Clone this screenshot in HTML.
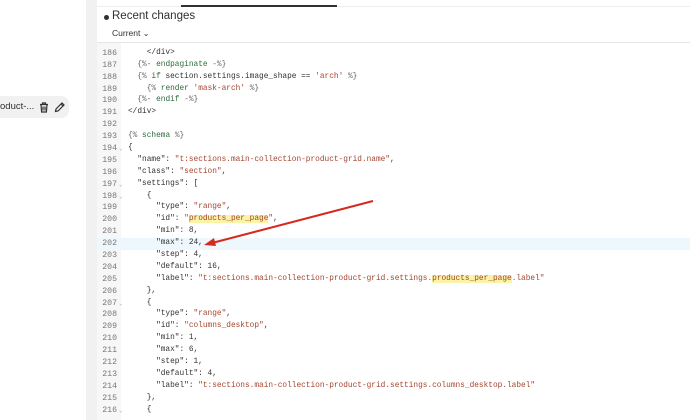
<!DOCTYPE html>
<html><head><meta charset="utf-8"><style>
*{margin:0;padding:0;box-sizing:border-box}
body{width:690px;height:420px;overflow:hidden;background:#fff;font-family:"Liberation Sans",sans-serif;position:relative}
.strip{position:absolute;left:86px;top:0;width:11px;height:420px;background:#f1f1f1}
.pill{position:absolute;left:0;top:96px;width:69px;height:22px;background:#f1f1f1;border-radius:0 8px 8px 0;font-size:9.5px;color:#303030;line-height:22px;padding-left:0}
.hdr{position:absolute;left:97px;top:0;width:593px;height:43px;background:#fff;border-bottom:1px solid #e6e6e6;z-index:2}
.hdr .tl{position:absolute;left:0;top:6px;width:593px;height:1px;background:#eee}
.hdr .tab{position:absolute;left:84px;top:5px;width:156px;height:2px;background:#303030}
.gut{position:absolute;left:97px;top:43px;width:24px;height:377px;background:#f7f7f7}
.code{position:absolute;left:97px;top:36px;width:593px;font-family:"Liberation Mono",monospace;font-size:7.8px;color:#333}
.l{height:11.9px;line-height:11.9px;white-space:pre;position:relative}
.l .n{position:absolute;left:0;width:20px;text-align:right;color:#777;font-size:8.2px}
.l .f{position:absolute;left:22px;color:#aaa;font-size:6px}
.l .c{position:absolute;left:31px}
.hl{background:#eef7fc}
.s{color:#a5452f}.k{color:#2e6b3e}.g{color:#666}
.y{background:#fbf3a6}
</style></head><body>
<div class="strip"></div>
<div class="pill"><span style="position:absolute;left:0">oduct-...</span>
<svg style="position:absolute;left:39px;top:6px" width="10" height="11" viewBox="0 0 10 11"><path d="M1 2.5h8M3.5 2.5V1h3v1.5M2 2.5l.6 7.5h4.8l.6-7.5M4 4.5v4M6 4.5v4" stroke="#303030" stroke-width="1.2" fill="none"/></svg>
<svg style="position:absolute;left:54px;top:6px" width="11" height="11" viewBox="0 0 11 11"><path d="M1.5 9.5l.5-2.5 6-6 2 2-6 6z M7 2l2 2" stroke="#303030" stroke-width="1.2" fill="none"/></svg>
</div>
<div class="gut"></div>
<div class="code">
<div class="l"><span class="n">185</span><span class="c">      &lt;/div&gt;</span></div>
<div class="l"><span class="n">186</span><span class="c">    &lt;/div&gt;</span></div>
<div class="l"><span class="n">187</span><span class="c">  <span class="g">{%-</span> <span class="k">endpaginate</span> <span class="g">-%}</span></span></div>
<div class="l"><span class="n">188</span><span class="c">  <span class="g">{%</span> <span class="k">if</span> section.settings.image_shape == <span class="s">'arch'</span> <span class="g">%}</span></span></div>
<div class="l"><span class="n">189</span><span class="c">    <span class="g">{%</span> <span class="k">render</span> <span class="s">'mask-arch'</span> <span class="g">%}</span></span></div>
<div class="l"><span class="n">190</span><span class="c">  <span class="g">{%-</span> <span class="k">endif</span> <span class="g">-%}</span></span></div>
<div class="l"><span class="n">191</span><span class="c">&lt;/div&gt;</span></div>
<div class="l"><span class="n">192</span><span class="c"></span></div>
<div class="l"><span class="n">193</span><span class="c"><span class="g">{%</span> <span class="k">schema</span> <span class="g">%}</span></span></div>
<div class="l"><span class="n">194</span><span class="f">⌄</span><span class="c">{</span></div>
<div class="l"><span class="n">195</span><span class="c">  "name": <span class="s">"t:sections.main-collection-product-grid.name"</span>,</span></div>
<div class="l"><span class="n">196</span><span class="c">  "class": <span class="s">"section"</span>,</span></div>
<div class="l"><span class="n">197</span><span class="f">⌄</span><span class="c">  "settings": [</span></div>
<div class="l"><span class="n">198</span><span class="f">⌄</span><span class="c">    {</span></div>
<div class="l"><span class="n">199</span><span class="c">      "type": <span class="s">"range"</span>,</span></div>
<div class="l"><span class="n">200</span><span class="c">      "id": <span class="s">"<span class="y">products_per_page</span>"</span>,</span></div>
<div class="l"><span class="n">201</span><span class="c">      "min": 8,</span></div>
<div class="l hl"><span class="n">202</span><span class="c">      "max": 24,</span></div>
<div class="l"><span class="n">203</span><span class="c">      "step": 4,</span></div>
<div class="l"><span class="n">204</span><span class="c">      "default": 16,</span></div>
<div class="l"><span class="n">205</span><span class="c">      "label": <span class="s">"t:sections.main-collection-product-grid.settings.<span class="y">products_per_page</span>.label"</span></span></div>
<div class="l"><span class="n">206</span><span class="c">    },</span></div>
<div class="l"><span class="n">207</span><span class="f">⌄</span><span class="c">    {</span></div>
<div class="l"><span class="n">208</span><span class="c">      "type": <span class="s">"range"</span>,</span></div>
<div class="l"><span class="n">209</span><span class="c">      "id": <span class="s">"columns_desktop"</span>,</span></div>
<div class="l"><span class="n">210</span><span class="c">      "min": 1,</span></div>
<div class="l"><span class="n">211</span><span class="c">      "max": 6,</span></div>
<div class="l"><span class="n">212</span><span class="c">      "step": 1,</span></div>
<div class="l"><span class="n">213</span><span class="c">      "default": 4,</span></div>
<div class="l"><span class="n">214</span><span class="c">      "label": <span class="s">"t:sections.main-collection-product-grid.settings.columns_desktop.label"</span></span></div>
<div class="l"><span class="n">215</span><span class="c">    },</span></div>
<div class="l"><span class="n">216</span><span class="f">⌄</span><span class="c">    {</span></div>
</div>
<div class="hdr"><div class="tl"></div><div class="tab"></div>
<div style="position:absolute;left:7px;top:15px;width:5px;height:5px;border-radius:50%;background:#303030"></div>
<div style="position:absolute;left:15px;top:10px;font-size:11.5px;color:#303030">Recent changes</div>
<div style="position:absolute;left:15px;top:28px;font-size:8.5px;color:#303030">Current <span style="font-size:8px">⌄</span></div>
</div>
<svg style="position:absolute;left:0;top:0" width="690" height="420"><line x1="373" y1="201" x2="212" y2="243" stroke="#d42a20" stroke-width="2"/><path d="M204 245L214 238L216 246Z" fill="#d42a20"/></svg>
</body></html>
